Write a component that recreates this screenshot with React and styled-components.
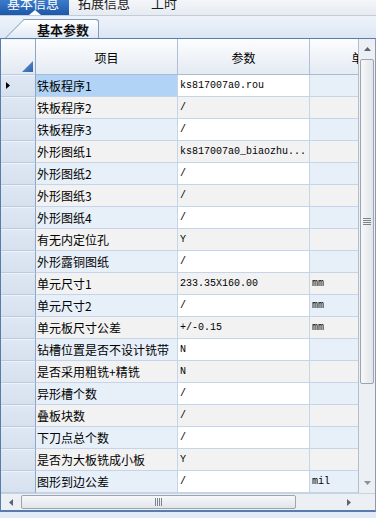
import React from 'react';
import styled, { createGlobalStyle } from 'styled-components';

const GlobalStyle = createGlobalStyle`
  html, body {
    margin: 0;
    padding: 0;
    overflow: hidden;
    background: #e2ecf8;
  }

  body {
    font-family: 'Noto Sans CJK SC', 'Liberation Sans', sans-serif;
    font-size: 12px;
    color: #000;
  }
`;

const CN = `'Noto Sans CJK SC', 'Liberation Sans', sans-serif`;
const MONO = `'Liberation Mono', 'Noto Sans CJK SC', monospace`;

const Page = styled.div`
  width: 376px;
  height: 518px;
  overflow: hidden;
`;

const TopBar = styled.div`
  display: flex;
  align-items: stretch;
  height: 15px;
  border-bottom: 1px solid #c3ccd8;
  background: linear-gradient(#f4f6f9, #e6ebf1);
`;

const TopTab = styled.div`
  position: relative;
  display: flex;
  align-items: flex-start;
  padding: 0 ${(p) => (p.active ? '10px' : '0')} 0 ${(p) => (p.active ? '7px' : '0')};
  margin-right: ${(p) => p.gap || 0}px;
  background: ${(p) => (p.active ? 'linear-gradient(#3c7bcb, #1d58a9)' : 'transparent')};
  color: ${(p) => (p.active ? '#fff' : '#1b1b1b')};
  font-family: ${CN};
  font-size: 13px;
  line-height: 13px;

  > span {
    margin-top: -4px;
  }
`;

const Caret = styled.div`
  position: absolute;
  left: 29px;
  bottom: 0;
  width: 0;
  height: 0;
  border-left: 6px solid transparent;
  border-right: 6px solid transparent;
  border-bottom: 5px solid #fff;
`;

const TabStrip = styled.div`
  display: flex;
  align-items: flex-end;
  height: 22px;
  background: linear-gradient(#eef3f9, #dce7f4);
`;

const SubTab = styled.div`
  position: relative;
  margin-left: 25px;
  height: 19px;
  width: 74px;
  box-sizing: border-box;
  border: 1px solid #7f9cc3;
  border-left: none;
  border-bottom: none;
  border-radius: 0 3px 0 0;
  background: linear-gradient(#ffffff, #dfe9f6);
  display: flex;
  align-items: center;

  &::before {
    content: '';
    position: absolute;
    left: -20px;
    top: -1px;
    bottom: 0;
    width: 24px;
    border-left: 1px solid #7f9cc3;
    border-top: 1px solid #7f9cc3;
    background: linear-gradient(#ffffff, #dfe9f6);
    transform: skewX(-45deg);
    transform-origin: bottom left;
  }

  > span {
    position: relative;
    margin-left: 12px;
    font-family: ${CN};
    font-weight: bold;
    font-size: 13px;
    color: #111;
  }
`;

const Frame = styled.div`
  border: 1px solid #5a7cab;
  border-bottom-width: 2px;
  border-right-color: #8e9aab;
  background: #fff;
`;

const Body = styled.div`
  display: flex;
  height: 454px;
`;

const Viewport = styled.div`
  width: 357px;
  overflow: hidden;
`;

const Row = styled.div`
  display: grid;
  grid-template-columns: 35px 142px 132px 108px;
  height: ${(p) => p.h || 22}px;
`;

const Cell = styled.div`
  box-sizing: border-box;
  height: 100%;
  border-right: 1px solid #c5d4e8;
  border-bottom: 1px solid #c5d4e8;
  padding-left: ${(p) => (p.mono ? 2 : 1)}px;
  font-family: ${(p) => (p.mono ? MONO : CN)};
  font-size: ${(p) => (p.mono ? 10 : 12)}px;
  line-height: 21px;
  color: #000;
  white-space: nowrap;
  overflow: hidden;
  background: ${(p) => p.bg};
`;

const HeadCell = styled.div`
  box-sizing: border-box;
  height: 100%;
  display: flex;
  align-items: center;
  justify-content: center;
  padding-top: 2px;
  border-right: 1px solid #aebfd6;
  border-bottom: 1px solid #a9bad2;
  background: linear-gradient(#fdfdfe, #e4ebf3);
  font-family: ${CN};
  font-size: 12px;
  white-space: nowrap;
  overflow: hidden;
`;

const RowHead = styled.div`
  box-sizing: border-box;
  height: 100%;
  display: flex;
  align-items: ${(p) => (p.corner ? 'flex-end' : 'center')};
  justify-content: ${(p) => (p.corner ? 'flex-end' : 'flex-start')};
  padding: ${(p) => (p.corner ? '0 2px 2px 0' : '0 0 0 5px')};
  border-right: 1px solid #8ea6c6;
  border-bottom: 1px solid #bccbdf;
  box-shadow: inset 0 1px 0 #eef3f9;
  background: ${(p) => (p.corner ? 'linear-gradient(#fbfcfd, #e2e9f2)' : 'linear-gradient(#dfe8f4, #d6e1ef)')};
`;

const VScroll = styled.div`
  width: 17px;
  box-sizing: border-box;
  border-left: 1px solid #b3bfcd;
  background: #eceff3;
  display: flex;
  flex-direction: column;
  align-items: center;
`;

const ArrowBox = styled.div`
  height: ${(p) => p.h}px;
  width: ${(p) => p.w || 15}px;
  display: flex;
  align-items: center;
  justify-content: center;
  flex-shrink: 0;
`;

const VThumb = styled.div`
  width: 14px;
  height: 325px;
  box-sizing: border-box;
  border: 1px solid #9ca5b1;
  border-radius: 2px;
  background: linear-gradient(90deg, #f7f8f9, #e1e5ea);
  display: flex;
  align-items: center;
  justify-content: center;
`;

const Track = styled.div`
  flex: 1;
`;

const HScroll = styled.div`
  display: flex;
  align-items: center;
  height: 17px;
  box-sizing: border-box;
  border-top: 1px solid #c9d2dd;
  background: #eceff3;
`;

const HThumb = styled.div`
  width: 275px;
  height: 14px;
  box-sizing: border-box;
  border: 1px solid #9ca5b1;
  border-radius: 2px;
  background: linear-gradient(#f7f8f9, #e1e5ea);
  display: flex;
  align-items: center;
  justify-content: center;
`;

const Grip = ({ vertical }) => (
  <svg width={vertical ? 8 : 7} height={vertical ? 7 : 8}>
    {[0, 2, 4, 6].map((o) =>
      vertical ? (
        <rect key={o} x="0" y={o} width="8" height="1" fill="#7b8591" />
      ) : (
        <rect key={o} x={o} y="0" width="1" height="8" fill="#7b8591" />
      )
    )}
  </svg>
);

const Tri = ({ dir, color = '#5b6470' }) => {
  const pts = {
    up: '0,4 3.5,0 7,4',
    down: '0,0 7,0 3.5,4',
    left: '4,0 4,7 0,3.5',
    right: '0,0 0,7 4,3.5',
  }[dir];
  const horiz = dir === 'left' || dir === 'right';
  return (
    <svg width={horiz ? 4 : 7} height={horiz ? 7 : 4}>
      <polygon points={pts} fill={color} />
    </svg>
  );
};

const rows = [
  ['铁板程序1', 'ks817007a0.rou', ''],
  ['铁板程序2', '/', ''],
  ['铁板程序3', '/', ''],
  ['外形图纸1', 'ks817007a0_biaozhu...', ''],
  ['外形图纸2', '/', ''],
  ['外形图纸3', '/', ''],
  ['外形图纸4', '/', ''],
  ['有无内定位孔', 'Y', ''],
  ['外形露铜图纸', '/', ''],
  ['单元尺寸1', '233.35X160.00', 'mm'],
  ['单元尺寸2', '/', 'mm'],
  ['单元板尺寸公差', '+/-0.15', 'mm'],
  ['钻槽位置是否不设计铣带', 'N', ''],
  ['是否采用粗铣+精铣', 'N', ''],
  ['异形槽个数', '/', ''],
  ['叠板块数', '/', ''],
  ['下刀点总个数', '/', ''],
  ['是否为大板铣成小板', 'Y', ''],
  ['图形到边公差', '/', 'mil'],
];

const App = () => (
  <Page>
    <GlobalStyle />
    <TopBar>
      <TopTab active gap={9}>
        <span>基本信息</span>
        <Caret />
      </TopTab>
      <TopTab gap={21}>
        <span>拓展信息</span>
      </TopTab>
      <TopTab>
        <span>工时</span>
      </TopTab>
    </TopBar>

    <TabStrip>
      <SubTab>
        <span>基本参数</span>
      </SubTab>
    </TabStrip>

    <Frame>
      <Body>
        <Viewport>
          <Row h={36}>
            <RowHead corner>
              <svg width="11" height="11">
                <defs>
                  <linearGradient id="cornerBlue" x1="0" y1="0" x2="1" y2="1">
                    <stop offset="0" stopColor="#6d9fd8" />
                    <stop offset="1" stopColor="#2b5fa8" />
                  </linearGradient>
                </defs>
                <polygon points="0,11 11,0 11,11" fill="url(#cornerBlue)" />
              </svg>
            </RowHead>
            <HeadCell>项目</HeadCell>
            <HeadCell>参数</HeadCell>
            <HeadCell>单位</HeadCell>
          </Row>
          {rows.map(([name, value, unit], i) => {
            const alt = i % 2 === 1;
            return (
              <Row key={name}>
                <RowHead>{i === 0 && <Tri dir="right" color="#000" />}</RowHead>
                <Cell bg={i === 0 ? '#b1d3f5' : alt ? '#f2f2f2' : '#e7eff9'}>{name}</Cell>
                <Cell mono bg={alt ? '#f2f2f2' : '#ffffff'}>{value}</Cell>
                <Cell mono bg={alt ? '#f2f2f2' : '#e7eff9'}>{unit}</Cell>
              </Row>
            );
          })}
        </Viewport>
        <VScroll>
          <ArrowBox h={20}>
            <Tri dir="up" />
          </ArrowBox>
          <VThumb>
            <Grip vertical />
          </VThumb>
          <Track />
          <ArrowBox h={20}>
            <Tri dir="down" color="#8a929c" />
          </ArrowBox>
        </VScroll>
      </Body>
      <HScroll>
        <ArrowBox h={15} w={20}>
          <Tri dir="left" />
        </ArrowBox>
        <HThumb>
          <Grip />
        </HThumb>
        <Track />
        <ArrowBox h={15} w={20}>
          <Tri dir="right" />
        </ArrowBox>
        <ArrowBox h={15} w={16} />
      </HScroll>
    </Frame>
  </Page>
);

export default App;
